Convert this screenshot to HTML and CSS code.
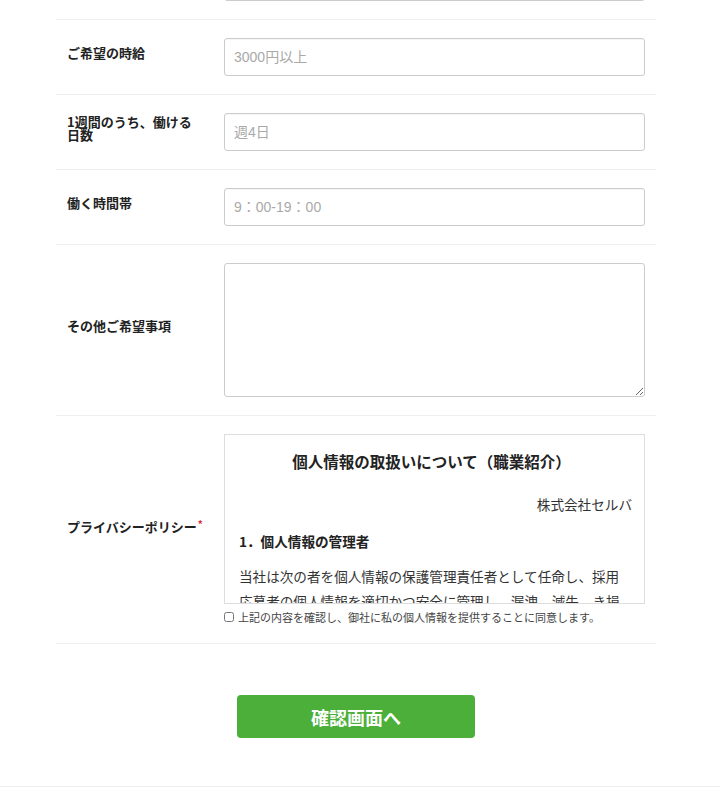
FILE: index.html
```html
<!DOCTYPE html>
<html lang="ja">
<head>
<meta charset="utf-8">
<title>フォーム</title>
<link rel="stylesheet" href="styles.css">
</head>
<body>
<div class="form">
  <div class="row row-prev">
    <div class="label"></div>
    <div class="field"><input class="text" type="text"></div>
  </div>
  <div class="row">
    <div class="label">ご希望の時給</div>
    <div class="field"><input class="text" type="text" placeholder="3000円以上"></div>
  </div>
  <div class="row">
    <div class="label">1週間のうち、働ける日数</div>
    <div class="field"><input class="text" type="text" placeholder="週4日"></div>
  </div>
  <div class="row">
    <div class="label">働く時間帯</div>
    <div class="field"><input class="text" type="text" placeholder="9：00-19：00"></div>
  </div>
  <div class="row">
    <div class="label">その他ご希望事項</div>
    <div class="field"><textarea class="area"></textarea></div>
  </div>
  <div class="row">
    <div class="label label-nowrap">プライバシーポリシー<span class="req">*</span></div>
    <div class="field">
      <div class="policy">
        <h2 class="policy-title">個人情報の取扱いについて（職業紹介）</h2>
        <p class="policy-company">株式会社セルバ</p>
        <h3 class="policy-heading">1．個人情報の管理者</h3>
        <p class="policy-text">当社は次の者を個人情報の保護管理責任者として任命し、採用応募者の個人情報を適切かつ安全に管理し、漏洩、滅失、き損の防止のための措置を講じます。</p>
      </div>
      <label class="agree"><input class="check" type="checkbox">上記の内容を確認し、御社に私の個人情報を提供することに同意します。</label>
    </div>
  </div>
  <div class="actions">
    <button class="submit" type="button">確認画面へ</button>
  </div>
</div>
<div class="footer-line"></div>
</body>
</html>
```

FILE: styles.css
```css
html, body {
  margin: 0;
  padding: 0;
  background: #fff;
  overflow: hidden;
}
body {
  font-family: "Liberation Sans", "Noto Sans CJK JP", sans-serif;
  color: #333;
}
.form {
  width: 600px;
  margin-left: 56px;
  margin-top: -55px;
}
.row {
  display: grid;
  grid-template-columns: 168px 421px;
  padding: 18px 11px 18px 0;
  border-top: 1px solid #eee;
}
.row-prev {
  border-top: none;
}
.label {
  align-self: center;
  padding: 0 27px 9px 11px;
  font-family: "Noto Sans CJK JP", sans-serif;
  font-weight: bold;
  font-size: 13px;
  line-height: 13px;
  color: #222;
}
.label-nowrap {
  white-space: nowrap;
  padding-right: 0;
}
.req {
  color: #e0303a;
  font-size: 10px;
  vertical-align: 4px;
  margin-left: 1px;
}
.field {
  display: flex;
  flex-direction: column;
}
.text {
  box-sizing: border-box;
  width: 421px;
  height: 38px;
  margin: 0;
  padding: 0 9px;
  border: 1px solid #ccc;
  border-radius: 3px;
  box-shadow: inset 0 1px 1px rgba(0,0,0,0.04);
  font-family: "Liberation Sans", "Noto Sans CJK JP", sans-serif;
  font-size: 14px;
  color: #333;
  background: #fff;
}
.text::placeholder {
  color: #a9a9a9;
}
.area {
  box-sizing: border-box;
  width: 421px;
  height: 134px;
  margin: 0;
  padding: 8px 9px;
  border: 1px solid #ccc;
  border-radius: 3px;
  font-size: 14px;
  resize: vertical;
  background: #fff;
}
.policy {
  box-sizing: border-box;
  width: 421px;
  height: 170px;
  border: 1px solid #ddd;
  overflow: hidden;
  padding: 0 12px 0 14px;
  font-family: "Noto Sans CJK JP", sans-serif;
  color: #333;
}
.policy-title {
  margin: 14px 8px 0 0;
  font-size: 15.5px;
  line-height: 24px;
  font-weight: bold;
  text-align: center;
  color: #222;
}
.policy-company {
  margin: 19px 0 0;
  font-size: 13.6px;
  line-height: 24px;
  text-align: right;
}
.policy-heading {
  margin: 13px 0 0;
  font-size: 13.6px;
  line-height: 24px;
  font-weight: bold;
  color: #222;
}
.policy-text {
  margin: 11px 4px 0 0;
  font-size: 13.6px;
  line-height: 25px;
}
.agree {
  display: flex;
  align-items: center;
  margin-top: 4px;
  height: 17px;
  font-family: "Noto Sans CJK JP", sans-serif;
  font-size: 11px;
  color: #444;
}
.check {
  width: 10px;
  height: 10px;
  margin: 0 4px 0 0;
}
.actions {
  border-top: 1px solid #eee;
  padding: 51px 0 48px;
  display: flex;
  justify-content: center;
}
.submit {
  width: 238px;
  height: 43px;
  border: none;
  border-radius: 4px;
  background: #4caf3a;
  color: #fff;
  font-family: "Noto Sans CJK JP", sans-serif;
  font-size: 18px;
  font-weight: bold;
  cursor: pointer;
}
.footer-line {
  border-top: 1px solid #eee;
}
```
